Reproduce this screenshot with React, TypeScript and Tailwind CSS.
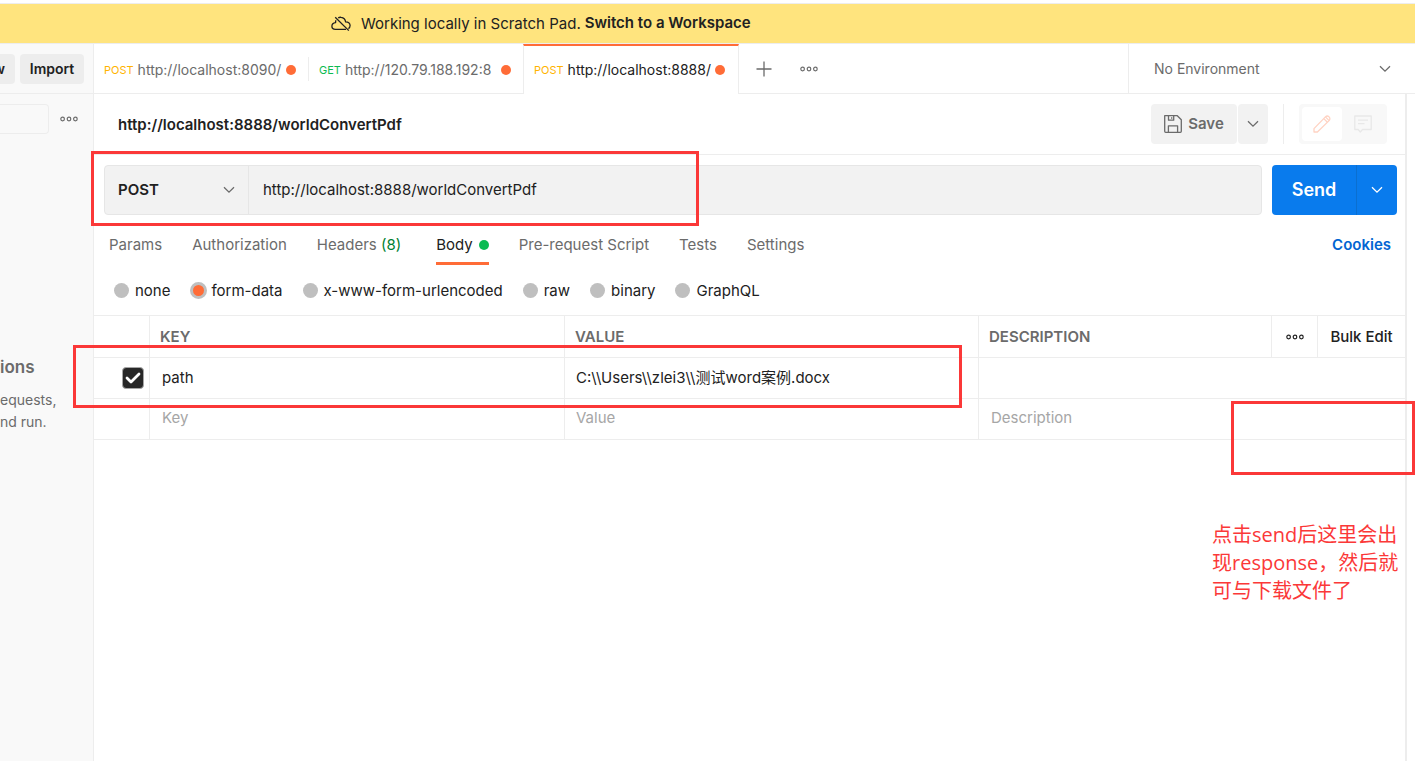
import React from 'react';
import clsx from 'clsx';

type IconProps = { className?: string };

const ChevronIcon = ({ className }: IconProps) => (
  <svg className={className} width="12" height="8" viewBox="0 0 12 8" fill="none" stroke="currentColor" strokeWidth="1.3" aria-hidden="true">
    <path d="M1 1.2 6 6.2l5-5" />
  </svg>
);

const MoreIcon = ({ className }: IconProps) => (
  <svg className={className} width="18" height="6" viewBox="0 0 18 6" fill="none" stroke="currentColor" strokeWidth="1.2" aria-hidden="true">
    <circle cx="2.6" cy="3" r="1.8" />
    <circle cx="9" cy="3" r="1.8" />
    <circle cx="15.4" cy="3" r="1.8" />
  </svg>
);

const CloudOffIcon = ({ className }: IconProps) => (
  <svg className={className} width="20" height="16" viewBox="0 0 20 16" fill="none" stroke="currentColor" strokeWidth="1.3" strokeLinejoin="round" aria-hidden="true">
    <path d="M5 4.2C4.6 5 4.5 5.8 4.6 6.6 2.4 6.9.9 8.3.9 10.2c0 1.8 1.5 3.1 3.5 3.1H15" />
    <path d="M7.2 1.9C8 1.4 9 1.1 10.1 1.3c2.4.3 4.2 2.2 4.5 4.6 2.5-.1 4.5 1.4 4.5 3.6 0 1.3-.6 2.4-1.7 3.1" />
    <path d="M4.2 1.2 17.8 14.6" />
  </svg>
);

const PlusIcon = () => (
  <svg width="16" height="16" viewBox="0 0 16 16" stroke="currentColor" strokeWidth="1.3" aria-hidden="true">
    <path d="M8 .5v15M.5 8h15" />
  </svg>
);

const SaveIcon = () => (
  <svg width="18" height="18" viewBox="0 0 18 18" fill="none" stroke="currentColor" strokeWidth="1.3" strokeLinejoin="round" aria-hidden="true">
    <path d="M.7.7h12.6l4 4v11.6a1 1 0 0 1-1 1H1.7a1 1 0 0 1-1-1z" />
    <path d="M4.5.7v4.5h5.2V.7M4.4 17.3v-6.5h9.2v6.5M7.7 2.3v1.5" />
  </svg>
);

const PencilIcon = () => (
  <svg width="18" height="18" viewBox="0 0 18 18" fill="none" stroke="currentColor" strokeWidth="1.3" strokeLinejoin="round" aria-hidden="true">
    <path d="M1 17v-3.4L12.4 1.9a2.6 2.6 0 0 1 3.700 3.700L4.400 17z" />
    <path d="m10.800 3.600 3.600 3.600M12.400 1.900l3.700 3.700" />
  </svg>
);

const CommentIcon = () => (
  <svg width="18" height="18" viewBox="0 0 18 18" fill="none" stroke="currentColor" strokeWidth="1.3" strokeLinejoin="round" aria-hidden="true">
    <path d="M.8 1h16.4v13.5H8.5L6.3 17 4.2 14.5H.8zM4 5.2h10M4 8.7h6.5" />
  </svg>
);

const CheckIcon = () => (
  <svg className="pointer-events-none col-start-1 row-start-1" width="16" height="12" viewBox="0 0 16 12" fill="none" stroke="white" strokeWidth="2.8" strokeLinecap="round" strokeLinejoin="round" aria-hidden="true">
    <path d="m2 6 4 4 8-8" />
  </svg>
);

const requests = [
  { method: 'POST', url: 'http://localhost:8090/', active: false },
  { method: 'GET', url: 'http://120.79.188.192:8', active: false },
  { method: 'POST', url: 'http://localhost:8888/', active: true },
];

const bodyTypes = ['none', 'form-data', 'x-www-form-urlencoded', 'raw', 'binary', 'GraphQL'];

const Banner = () => (
  <div className="mt-[3px] flex h-[41px] shrink-0 items-center border-y border-[#ededed] bg-[#ffe47e] pl-[331px] text-[15px]">
    <CloudOffIcon className="mr-[10px]" />
    <span className="mr-1 pt-0.5">Working locally in Scratch Pad.</span>
    <a href="#workspace" className="font-semibold">Switch to a Workspace</a>
  </div>
);

const Sidebar = () => (
  <aside className="flex w-[94px] shrink-0 flex-col overflow-hidden border-r border-[#ededed] bg-[#f9f9f9] text-[#6b6b6b]">
    <div className="flex h-[50px] shrink-0 items-center gap-[5px] border-b border-[#ededed] text-sm font-semibold text-[#212121]">
      <button className="flex h-[30px] w-[15px] justify-end rounded-r bg-[#ededed] pr-[10px]">
        <span className="self-center">w</span>
      </button>
      <button className="h-[30px] w-16 rounded bg-[#ededed] text-center">Import</button>
    </div>
    <div className="flex items-center justify-between pt-[10px] pr-[15px]">
      <input aria-label="Filter" className="h-[30px] w-[49px] rounded-r-sm border border-l-0 border-[#ededed] bg-[#f9f9f9]" />
      <button aria-label="More"><MoreIcon /></button>
    </div>
    <h2 className="pt-[219px] text-[17px] leading-7 font-semibold">ions</h2>
    <p className="pt-2 text-sm leading-[22px]">
      equests,
      <br />
      nd run.
    </p>
  </aside>
);

const RequestTab: React.FC<(typeof requests)[number]> = ({ method, url, active }) => (
  <button
    role="tab"
    aria-selected={active}
    className={clsx(
      'flex items-center border-[#ededed]',
      active ? '-ml-px w-[216px] border-x border-t-2 border-t-[#ff6c37] bg-white text-[#212121]' : 'w-[215px] border-b pt-[3px] text-[#6b6b6b]'
    )}
  >
    <span className={clsx('ml-[10px] text-[11px]', method === 'GET' ? 'text-[#0cbb52]' : 'text-[#ffb400]')}>{method}</span>
    <span className="ml-1 flex-1 text-left text-sm whitespace-nowrap">{url}</span>
    <span className="mr-[13px] size-[10px] shrink-0 rounded-full bg-[#ff6c37]" />
  </button>
);

const RequestTabs = () => (
  <div className="flex h-[50px] shrink-0 text-[#6b6b6b]">
    <div role="tablist" className="flex">
      <RequestTab {...requests[0]} />
      <div className="flex items-center border-b border-[#ededed]"><span className="-ml-px h-6 w-px bg-[#ededed]" /></div>
      <RequestTab {...requests[1]} />
      <RequestTab {...requests[2]} />
    </div>
    <div className="flex flex-1 items-center gap-[28px] border-b border-[#ededed] pl-[17px]">
      <button aria-label="New tab"><PlusIcon /></button>
      <button aria-label="Tab options"><MoreIcon /></button>
    </div>
    <label className="relative flex w-[287px] items-center border-b border-l border-[#ededed]">
      <select aria-label="Environment" className="size-full appearance-none pl-[25px] text-sm">
        <option>No Environment</option>
      </select>
      <ChevronIcon className="pointer-events-none absolute right-[24px]" />
    </label>
  </div>
);

const TitleRow = () => (
  <div className="flex h-[61px] shrink-0 items-center border-b border-[#ededed] pr-[18px] pl-6">
    <h1 className="flex-1 pt-0.5 text-[15px] font-semibold">http://localhost:8888/worldConvertPdf</h1>
    <div className="flex gap-px text-[#6b6b6b]">
      <button className="flex h-10 w-[86px] items-center justify-center gap-[6px] rounded bg-[#f2f2f2] text-[15px] font-semibold">
        <SaveIcon />
        Save
      </button>
      <button aria-label="Save options" className="flex h-10 w-[30px] items-center justify-center rounded bg-[#f2f2f2]">
        <ChevronIcon />
      </button>
    </div>
    <span className="mx-[15px] h-10 w-px bg-[#ededed]" />
    <div className="flex h-10 rounded bg-[#f8f8f8] p-[3px]">
      <button aria-label="Edit" className="flex w-10 items-center justify-center rounded bg-white text-[#ffd3c3]"><PencilIcon /></button>
      <button aria-label="Comments" className="flex w-[42px] items-center justify-center text-[#e8e8e8]"><CommentIcon /></button>
    </div>
  </div>
);

const UrlBar = () => (
  <div className="flex gap-[10px] pt-[10px] pr-2 pl-[10px] text-[15px]">
    <div className="flex h-[50px] flex-1 overflow-hidden rounded border border-[#e6e6e6] bg-[#f2f2f2]">
      <label className="relative flex w-36 items-center border-r border-[#e6e6e6]">
        <select aria-label="Method" className="size-full appearance-none pl-[13px] font-semibold">
          <option>POST</option>
        </select>
        <ChevronIcon className="pointer-events-none absolute right-[13px] text-[#6b6b6b]" />
      </label>
      <input aria-label="Request URL" defaultValue="http://localhost:8888/worldConvertPdf" className="flex-1 px-[14px]" />
    </div>
    <div className="flex h-[50px] overflow-hidden rounded bg-[#097bed] text-white">
      <button className="w-[84px] text-lg font-semibold">Send</button>
      <button aria-label="Send options" className="flex w-[41px] items-center justify-center border-l border-[#0b6fd0]">
        <ChevronIcon />
      </button>
    </div>
  </div>
);

const SectionTabs = () => (
  <nav className="flex h-[50px] shrink-0 gap-[30px] pr-[14px] pl-[15px] text-[15px] text-[#6b6b6b]">
    <button className="pt-[10px]">Params</button>
    <button className="pt-[10px]">Authorization</button>
    <button className="pt-[10px] pr-[5px]">Headers <span className="text-[#007f31]">(8)</span></button>
    <button className="flex flex-col text-[#212121]">
      <span className="flex flex-1 items-center gap-[6px] pt-[13px]">
        Body
        <span className="size-[10px] rounded-full bg-[#0cbb52]" />
      </span>
      <span className="h-[3px] w-full bg-[#ff6c37]" />
    </button>
    <button className="pt-[10px]">Pre-request Script</button>
    <button className="pt-[10px]">Tests</button>
    <button className="pt-[10px]">Settings</button>
    <a href="#cookies" className="ml-auto self-center pt-[10px] font-semibold text-[#0265d2]">Cookies</a>
  </nav>
);

const BodyTypes = () => (
  <div className="flex h-[50px] shrink-0 items-center gap-[20px] pl-[20px] text-[15px]">
    {bodyTypes.map((type) => (
      <label key={type} className="flex items-center gap-[6px]">
        <input
          type="radio"
          name="body-type"
          defaultChecked={type === 'form-data'}
          className="size-[15px] appearance-none rounded-full bg-[#bfbfbf] checked:-mr-0.5 checked:size-[17px] checked:border-[3px] checked:border-[#bfbfbf] checked:bg-[#ff6c37]"
        />
        <span className="pt-0.5">{type}</span>
      </label>
    ))}
  </div>
);

const cell = 'border-[#ededed] border-b border-l';
const headCell = 'border-[#ededed] border-b border-l pt-0.5 pl-[10px] font-semibold';

const FormTable = () => (
  <table className="w-full table-fixed border-separate border-spacing-0 border-t border-[#ededed] text-left text-[15px]">
    <colgroup>
      <col className="w-[55px]" />
      <col className="w-[415px]" />
      <col className="w-[414px]" />
      <col />
      <col className="w-[46px]" />
      <col className="w-[88px]" />
    </colgroup>
    <thead>
      <tr className="h-[42px] text-[#6b6b6b]">
        <td className="border-b border-[#ededed]" />
        <th className={headCell}>KEY</th>
        <th className={headCell}>VALUE</th>
        <th className={headCell}>DESCRIPTION</th>
        <th className={clsx(cell, 'text-[#212121]')}>
          <button aria-label="Columns" className="flex w-full justify-center"><MoreIcon /></button>
        </th>
        <th className={clsx(cell, 'pt-0.5 text-center text-[#212121]')}>
          <button className="font-medium whitespace-nowrap">Bulk Edit</button>
        </th>
      </tr>
    </thead>
    <tbody>
      <tr className="h-[41px]">
        <td className="border-b border-[#ededed]">
          <label className="ml-[28px] grid size-[22px] place-items-center">
            <input type="checkbox" defaultChecked aria-label="Enable path" className="col-start-1 row-start-1 size-[22px] appearance-none rounded border border-[#a6a6a6] checked:bg-[#282828]" />
            <CheckIcon />
          </label>
        </td>
        <td className={cell}>
          <input aria-label="Key of row 1" defaultValue="path" className="w-full pl-3" />
        </td>
        <td className={cell}>
          <input aria-label="Value of row 1" defaultValue="C:\\Users\\zlei3\\测试word案例.docx" className="w-full pl-[11px]" />
        </td>
        <td className={cell} colSpan={3}>
          <input aria-label="Description of row 1" className="w-full pl-3" />
        </td>
      </tr>
      <tr className="h-[41px]">
        <td className="border-b border-[#ededed]" />
        <td className={cell}>
          <input aria-label="New key" placeholder="Key" className="w-full pb-0.5 pl-3 placeholder:text-[#a6a6a6]" />
        </td>
        <td className={cell}>
          <input aria-label="New value" placeholder="Value" className="w-full pb-0.5 pl-[11px] placeholder:text-[#a6a6a6]" />
        </td>
        <td className={cell} colSpan={3}>
          <input aria-label="New description" placeholder="Description" className="w-full pb-0.5 pl-3 placeholder:text-[#a6a6a6]" />
        </td>
      </tr>
    </tbody>
  </table>
);

// Red marks drawn over the window
const Annotations = () => (
  <div className="pointer-events-none absolute inset-0 text-[#fb3838]">
    <div className="absolute top-[151px] left-[91px] h-[75px] w-[608px] border-[3px]" />
    <div className="absolute top-[345px] left-[73px] h-[63px] w-[889px] border-[3px]" />
    <div className="absolute top-[401px] right-0 h-[74px] w-[184px] border-[3px]" />
    <p className="absolute top-[521px] right-[11px] w-[192px] font-['Open_Sans','Noto_Sans_CJK_SC',sans-serif] text-xl leading-[28px]">
      点击send后这里会出
      <br />
      现response，然后就
      <br />
      可与下载文件了
    </p>
  </div>
);

export default function App() {
  return (
    <div className="relative flex min-h-screen flex-col overflow-hidden bg-white font-['Inter','Noto_Sans_CJK_SC',sans-serif] text-[#212121]">
      <Banner />
      <div className="flex flex-1">
        <Sidebar />
        <main className="flex min-w-0 flex-1 flex-col">
          <RequestTabs />
          <div className="mr-2 flex flex-1 flex-col border-r-2 border-[#ededed]">
            <TitleRow />
            <UrlBar />
            <SectionTabs />
            <BodyTypes />
            <FormTable />
          </div>
        </main>
      </div>
      <Annotations />
    </div>
  );
}
